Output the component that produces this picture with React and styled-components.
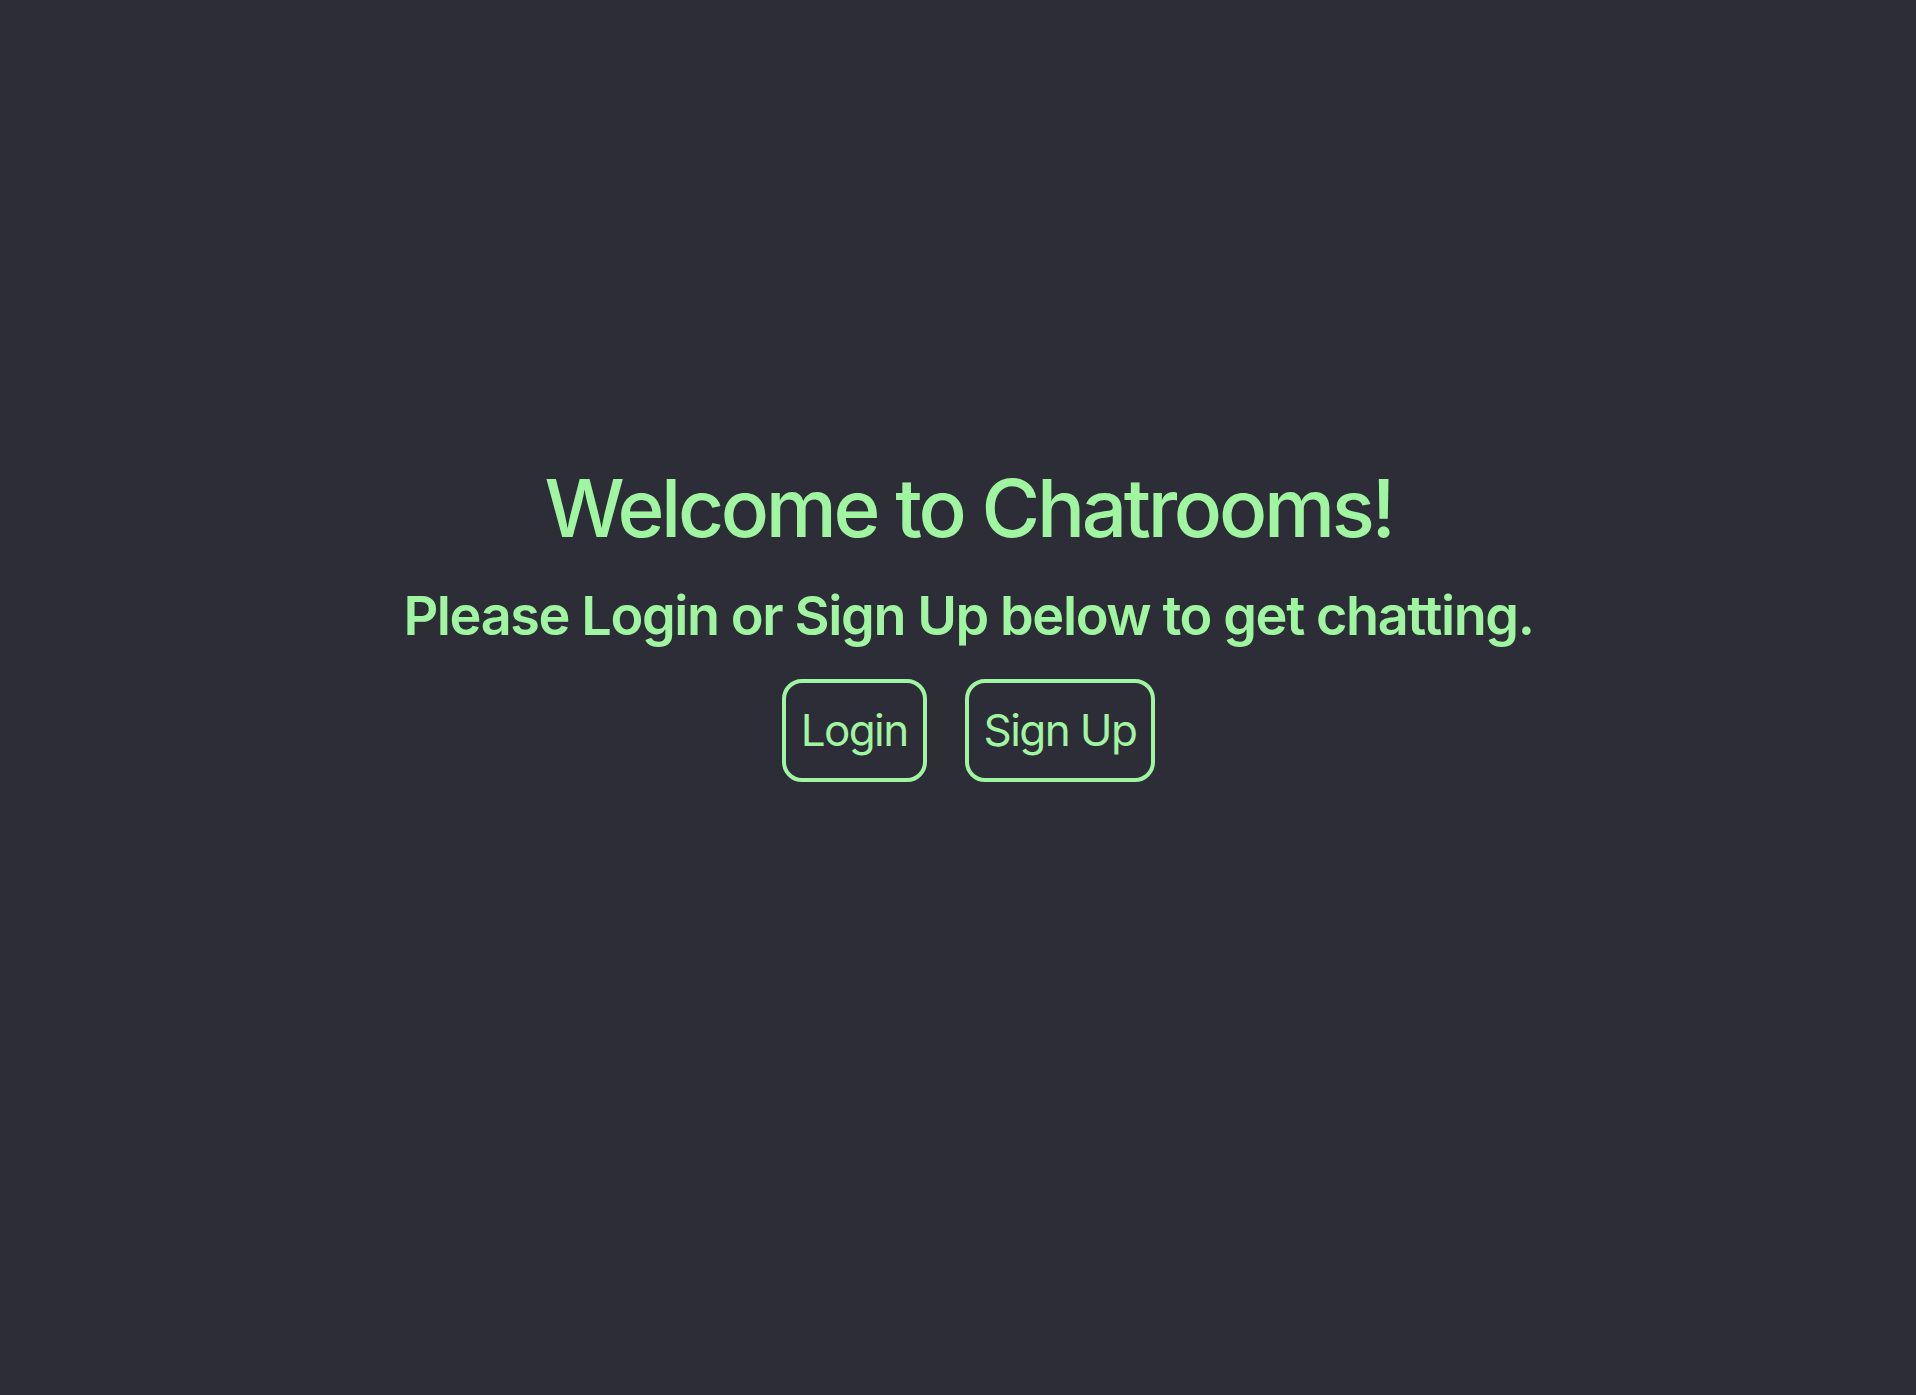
import React from "react";
import styled, { createGlobalStyle } from "styled-components";

const Global = createGlobalStyle`
  html, body { margin: 0; padding: 0; background: #2d2d37; }
  body { font-family: Inter, "Noto Sans", sans-serif; }
`;

const Page = styled.main`
  min-height: 1395px;
  box-sizing: border-box;
  display: flex;
  flex-direction: column;
  align-items: center;
  padding-top: 460px;
  padding-left: 21px;
  color: #a0f5a0;
`;

const Title = styled.h1`
  margin: 0;
  font-size: 80px;
  font-weight: 500;
  letter-spacing: -3.3px;
  line-height: 1.2;
`;

const Subtitle = styled.h2`
  margin: 28px 0 0;
  font-size: 54px;
  font-weight: 600;
  letter-spacing: -1.4px;
  line-height: 1.2;
`;

const Actions = styled.div`
  display: flex;
  gap: 38px;
  margin-top: 30px;
`;

const Button = styled.button`
  font-family: inherit;
  font-size: 44px;
  font-weight: 400;
  letter-spacing: -1.6px;
  color: #a0f5a0;
  background: transparent;
  border: 4px solid #a0f5a0;
  border-radius: 20px;
  padding: 19px 15px;
  line-height: 57px;
  cursor: pointer;
`;

export default function App() {
  return (
    <>
      <Global />
      <Page>
        <Title>Welcome to Chatrooms!</Title>
        <Subtitle>Please Login or Sign Up below to get chatting.</Subtitle>
        <Actions>
          <Button>Login</Button>
          <Button>Sign Up</Button>
        </Actions>
      </Page>
    </>
  );
}
